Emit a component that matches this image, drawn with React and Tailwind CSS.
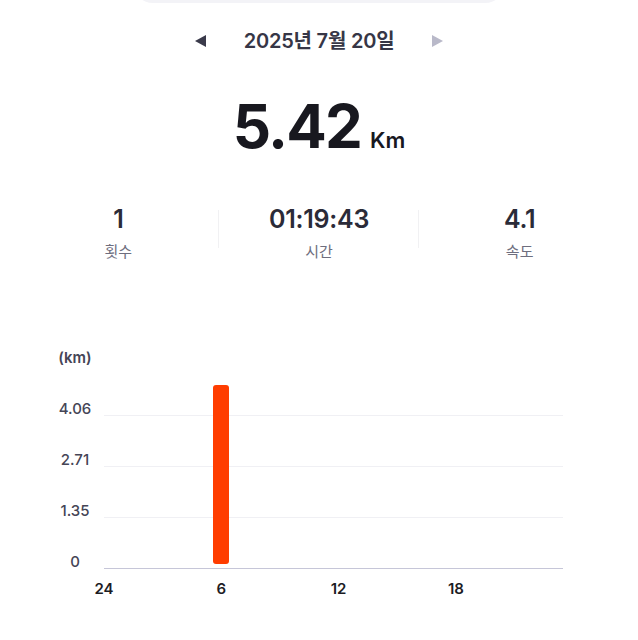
import React from "react";

const FONT = { fontFamily: '"Inter", "Noto Sans CJK KR", sans-serif' };

function Triangle({ dir, color }) {
  return (
    <svg width="13" height="14" viewBox="0 0 13 14">
      {dir === "left" ? (
        <path d="M1 7 L12 1 L12 13 Z" fill={color} />
      ) : (
        <path d="M12 7 L1 1 L1 13 Z" fill={color} />
      )}
    </svg>
  );
}

function Stat({ value, label, divider }) {
  return (
    <div className="relative flex flex-col items-center">
      <div className="text-[25px] leading-[30px] font-semibold text-[#2b2b38] tracking-[-0.01em]">{value}</div>
      <div className="mt-[8px] text-[15px] leading-[20px] text-[#6e6e7e]">{label}</div>
      {divider && <div className="absolute right-0 top-[6px] h-[38px] w-px bg-[#f1f1f3]" />}
    </div>
  );
}

function Row({ label, axis }) {
  return (
    <div className="flex items-end h-[51px]">
      <div className="w-[34px] text-center text-[15px] leading-[15px] font-medium text-[#454556]">{label}</div>
      <div className={"ml-[12px] w-[459px] " + (axis ? "border-b-[1.5px] border-[#c6c6d8]" : "border-b border-[#f0f0f4]")} />
    </div>
  );
}

export default function App() {
  return (
    <div className="w-[638px] h-[640px] bg-white overflow-hidden" style={FONT}>
      <div className="mx-auto -mt-[37px] w-[372px] h-[40px] rounded-full bg-[#f3f3f7]" />

      <div className="mt-[24px] flex items-center justify-center">
        <Triangle dir="left" color="#3a3a4a" />
        <div className="mx-[37px] text-[20px] leading-[28px] font-semibold text-[#363646] tracking-[-0.01em]">
          2025년 7월 20일
        </div>
        <Triangle dir="right" color="#b9b9c9" />
      </div>

      <div className="mt-[35px] flex items-baseline justify-center">
        <span className="text-[60px] leading-[72px] font-bold text-[#18181f] tracking-[-0.03em]">5.42</span>
        <span className="ml-[9px] text-[22px] font-semibold text-[#18181f]">Km</span>
      </div>

      <div className="mt-[42px] mx-[18px] grid grid-cols-3">
        <Stat value="1" label="횟수" divider />
        <Stat value="01:19:43" label="시간" divider />
        <Stat value="4.1" label="속도" />
      </div>

      <div className="mt-[88px] ml-[58px]">
        <div className="w-[34px] text-center text-[15px] leading-[16px] font-semibold text-[#454556]">(km)</div>
        <div className="relative -mt-[1px]">
          <Row label="4.06" />
          <Row label="2.71" />
          <Row label="1.35" />
          <Row label="0" axis />
          <div
            className="absolute rounded-[3px] bg-[#ff3d00]"
            style={{ left: 155, width: 16, top: 20, height: 179 }}
          />
        </div>
        <div className="ml-[46px] mt-[12px] flex text-[15px] leading-[16px] font-semibold text-[#1c1c24]">
          {["24", "6", "12", "18"].map((t) => (
            <div key={t} className="w-[117.3px] flex">
              <span className="-translate-x-1/2">{t}</span>
            </div>
          ))}
        </div>
      </div>
    </div>
  );
}
